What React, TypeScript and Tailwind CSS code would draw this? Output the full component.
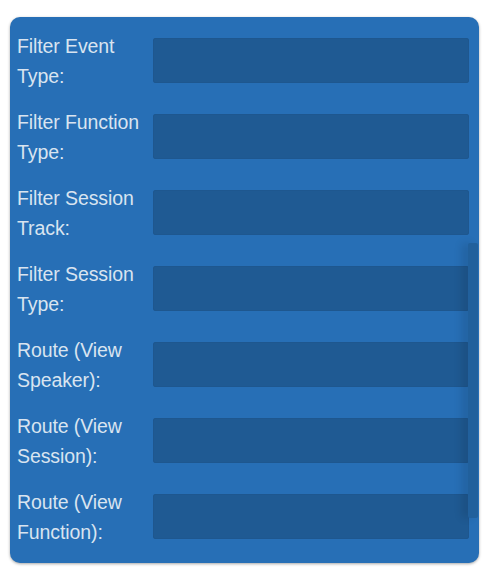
import React from "react";

const fields = [
  ["Filter Event", "Type:"],
  ["Filter Function", "Type:"],
  ["Filter Session", "Track:"],
  ["Filter Session", "Type:"],
  ["Route (View", "Speaker):"],
  ["Route (View", "Session):"],
  ["Route (View", "Function):"],
];

export default function App() {
  return (
    <div className="w-[489px] h-[582px] bg-white pt-[17px] pl-[10px]">
      <div
        className="relative w-[469px] h-[546px] rounded-[10px] bg-[#276fb6] shadow-[0_1px_3px_rgba(0,0,0,0.35)] pt-[14px] pl-[7px] pr-[10px] flex flex-col gap-[16px]"
        style={{ fontFamily: '"Liberation Sans", Arial, sans-serif' }}
      >
        {fields.map((f, i) => (
          <div key={i} className="flex">
            <div className="w-[136px] shrink-0 text-[19.5px] leading-[30px] text-[#d9e4f0] tracking-[-0.1px]">
              <div>{f[0]}</div>
              <div>{f[1]}</div>
            </div>
            <div className="flex-1 h-[45px] mt-[7px] rounded-[3px] bg-[#1f5a93] shadow-[inset_0_0_1px_rgba(0,0,0,0.25)]" />
          </div>
        ))}
        <div className="absolute right-[1px] top-[226px] w-[10px] h-[275px] rounded-[2px] bg-[#21609c] shadow-[-6px_0_8px_rgba(0,0,0,0.12)]" />
      </div>
    </div>
  );
}
